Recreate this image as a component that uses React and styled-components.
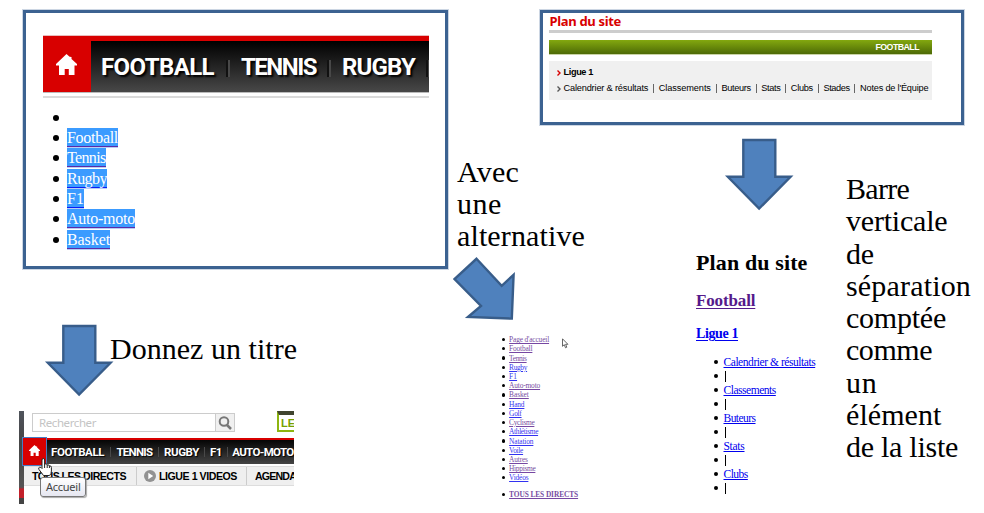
import React, { useLayoutEffect, useRef, useState } from "react";
import styled, { createGlobalStyle } from "styled-components";

const SERIF = '"Liberation Serif", serif';
const SANS = '"Liberation Sans", sans-serif';
const BLUE = "#0000ee";
const VISITED = "#551a8b";

const GlobalStyle = createGlobalStyle`
  * { box-sizing: border-box; }
  body { margin: 0; background: #fff; overflow: hidden; }
  svg { display: block; flex: none; }
  ul, h1, h2, h3, p { margin: 0; padding: 0; font-weight: inherit; font-size: inherit; }
`;

/* A run of text whose tracking is adjusted so that it fills a given width. */
const Run = styled.span`
  display: inline-block;
  flex: none;
  white-space: pre;
`;

function Fit({ width, children }) {
  const ref = useRef(null);
  const [spacing, setSpacing] = useState(0);
  useLayoutEffect(() => {
    const natural = ref.current.getBoundingClientRect().width;
    setSpacing((width - natural) / children.length);
  }, [width, children]);
  return (
    <Run ref={ref} style={{ letterSpacing: `${spacing}px` }}>
      {children}
    </Run>
  );
}

const Slide = styled.main`
  display: flex;
  width: 984px;
  height: 513px;
  overflow: hidden;
  background: #fff;
  color: #000;
`;
const LeftSide = styled.section`
  flex: none;
  width: 449px;
`;
const RightSide = styled.section`
  flex: none;
  width: 535px;
`;
const Columns = styled.div`
  display: flex;
`;
const Column = styled.div`
  flex: none;
  width: ${(p) => p.$width}px;
`;
const Frame = styled.div`
  width: ${(p) => p.$width}px;
  height: ${(p) => p.$height}px;
  margin: 10px 0 0 ${(p) => p.$left}px;
  border: 3px solid #3c6291;
  box-shadow: 0 0 0 1px #ccd6e3;
`;

const Caption = styled.p`
  margin: ${(p) => p.$margin};
  font: 30px/${(p) => p.$line || 32}px ${SERIF};
  display: flex;
  flex-direction: column;
  align-items: flex-start;
`;

const ArrowSvg = styled.svg`
  margin: ${(p) => p.$margin};
  fill: #4f81bd;
  stroke: #385d8a;
  stroke-width: 2.4;
`;

function DownArrow({ margin }) {
  return (
    <ArrowSvg $margin={margin} width="71" height="74" viewBox="0 0 71 74">
      <path d="M19.3 2H51.3V38.8H66.6L35.1 70.6L3.8 38.8H19.3Z" />
    </ArrowSvg>
  );
}

/* ---- Enlarged menu ---- */
const BigNav = styled.div`
  display: flex;
  width: 386px;
  height: 56px;
  margin: 23px 0 0 17px;
  background: #d80000;
  box-shadow: 0 -1px 0 #e9bcbc, 0 1px 0 #bbb;
`;
const BigHome = styled.div`
  flex: none;
  width: 48px;
  padding: 18px 0 0 13px;
`;
const BigBar = styled.div`
  display: flex;
  flex: 1;
  margin-top: 5px;
  padding: 8px 0 0 10px;
  background: linear-gradient(#000, #484848);
  color: #fff;
  font: 700 24px/36px Roboto, sans-serif;
  text-shadow: 2px 2px 2px #000;
  overflow: hidden;
`;
const BigSeparator = styled.i`
  flex: none;
  width: 4px;
  height: 17px;
  margin: 11px ${(p) => p.$after}px 0 ${(p) => p.$before}px;
  background: linear-gradient(90deg, #111 50%, #484848 50%);
`;
const GreyRule = styled.div`
  width: ${(p) => p.$width}px;
  height: ${(p) => p.$height}px;
  margin: ${(p) => p.$margin};
  background: ${(p) => p.$color};
`;

/* ---- Lists ---- */
const List = styled.ul`
  list-style: none;
  margin: ${(p) => p.$margin};
  font-family: ${SERIF};
  font-size: ${(p) => p.$size}px;
  line-height: ${(p) => p.$line}px;
`;
const Item = styled.li`
  display: flex;
  align-items: center;
  height: ${(p) => p.$height}px;
  margin-top: ${(p) => p.$before || 0}px;
  font-weight: ${(p) => (p.$bold ? 700 : 400)};
  &::before {
    content: "";
    flex: none;
    width: ${(p) => p.$dot}px;
    height: ${(p) => p.$dot}px;
    margin-right: ${(p) => p.$gap}px;
    border-radius: 50%;
    background: #000;
  }
`;
const TextLink = styled.a`
  display: inline-flex;
  color: ${(p) => (p.$visited ? VISITED : BLUE)};
  opacity: ${(p) => (p.$soft ? 0.8 : 1)};
  & > span {
    text-decoration: underline;
    text-decoration-thickness: 1px;
    text-underline-offset: ${(p) => p.$offset || 1}px;
  }
`;
const Selected = styled.a`
  display: inline-flex;
  height: 20px;
  background: #3b9bff;
  color: #fff;
  line-height: 20px;
  border-bottom: 1px solid #b9cdf5;
  box-shadow: inset 0 -1px 0 ${(p) => (p.$visited ? "#5a2ba8" : "#0a1ef5")};
`;

/* ---- Site map panel ---- */
const SiteTitle = styled.h1`
  margin: 0 0 0 6.5px;
  height: 17px;
  color: #d80000;
  font: 700 13px/16px "Noto Sans", sans-serif;
`;
const GreenBar = styled.div`
  display: flex;
  justify-content: flex-end;
  width: 383px;
  height: 14px;
  margin: 7px 0 0 6px;
  padding-right: 13px;
  background: linear-gradient(#83a80f, #4d6a06);
  box-shadow: 0 1px 0 #c9d3a5;
  color: #fff;
  font: 700 8.8px/14px ${SANS};
`;
const GreyPanel = styled.div`
  width: 383px;
  height: 39px;
  margin: 7px 0 0 6px;
  padding: 4px 0 0 8px;
  background: #f0f0f0;
  font: 9.2px/15.5px ${SANS};
`;
const PanelRow = styled.div`
  display: flex;
  align-items: center;
  height: 15.5px;
  font-weight: ${(p) => (p.$bold ? 700 : 400)};
`;
const Chevron = styled.svg`
  width: 4px;
  height: 6px;
  margin: 1px 2.5px 0 0;
  fill: none;
  stroke: ${(p) => p.$color};
  stroke-width: 1.4;
`;
const Pipe = styled.i`
  flex: none;
  width: 1px;
  height: 9px;
  margin: 0 4.7px 0 4.8px;
  background: #666;
`;

/* ---- Cropped page header ---- */
const Header = styled.div`
  position: relative;
  display: flex;
  width: 275px;
  height: 93px;
  margin: 13px 0 0 19px;
  overflow: hidden;
`;
const Edge = styled.div`
  flex: none;
  width: 5px;
  background: linear-gradient(#50545c, #454545 35%, #555 82%, #c2202a 84%, #c2202a 93%, #444 94%);
`;
const HeaderBody = styled.div`
  flex: none;
  width: 270px;
`;
const SearchLine = styled.div`
  display: flex;
  height: 27px;
`;
const SearchBox = styled.div`
  display: flex;
  flex: none;
  justify-content: space-between;
  width: 203px;
  height: 19px;
  margin: 2px 42px 0 8px;
  padding-left: 6px;
  border: 1px solid #ccc;
  color: #c4c4c4;
  font: 11.5px/18px "Noto Sans", sans-serif;
`;
const SearchButton = styled.div`
  width: 19px;
  padding: 2px;
  border-left: 1px solid #ccc;
  background: #f0f0f0;
`;
const Promo = styled.div`
  flex: none;
  width: 40px;
  height: 21px;
  border: 2px solid #8db510;
  border-top: 4px solid #40442f;
  color: #78a000;
  font: 700 11px/16px ${SANS};
  padding-left: 2px;
  white-space: nowrap;
`;
const SmallNav = styled.div`
  display: flex;
  align-items: center;
  height: 26px;
  border-top: 2px solid #d80000;
  background: linear-gradient(#050505, #444);
  color: #fff;
  font: 700 11.5px/24px Roboto, sans-serif;
  text-shadow: 1px 1px 1px #000;
`;
const SmallHome = styled.div`
  flex: none;
  width: 23px;
  height: 27px;
  margin: -1px 5px 0 -1px;
  padding: 7px 0 0 6px;
  background: #d80000;
  outline: 1px solid #477cc4;
`;
const SmallSeparator = styled.i`
  flex: none;
  width: 1px;
  height: 10px;
  margin: 0 ${(p) => p.$side}px;
  background: #494949;
`;
const SubNav = styled.div`
  display: flex;
  align-items: center;
  height: 20px;
  margin-top: 2px;
  padding-left: 8px;
  background: #efefef;
  border-top: 1px solid #ddd;
  border-bottom: 1px solid #ddd;
  font: 700 10.6px/18px ${SANS};
`;
const SubSeparator = styled.i`
  flex: none;
  width: 1px;
  height: 18px;
  margin: 0 ${(p) => p.$after}px 0 ${(p) => p.$before}px;
  background: #ccc;
`;
const PlayIcon = styled.svg`
  margin-right: 3px;
`;
const Tooltip = styled.div`
  position: absolute;
  left: 21px;
  top: 66px;
  width: 46px;
  height: 20px;
  padding-left: 5px;
  border: 1px solid #777;
  border-radius: 3px;
  background: linear-gradient(#fff, #e6e7f1);
  box-shadow: 1px 1px 1px #aaa;
  color: #444;
  font: 11px/17px "Noto Sans", sans-serif;
`;
const HandCursor = styled.svg`
  position: absolute;
  left: 18px;
  top: 46px;
`;

/* ---- Linear site map ---- */
const PlanTitle = styled.h1`
  margin-top: 38px;
  height: 26px;
  font: 700 22px/26px ${SERIF};
`;
const PlanHeading = styled.h2`
  margin-top: ${(p) => p.$top}px;
  height: 20px;
  font: 700 ${(p) => p.$size}px/20px ${SERIF};
`;
const TextBar = styled.i`
  width: 1px;
  height: 11px;
  margin-left: 1px;
  background: #000;
`;
const MiddleList = styled.div`
  display: flex;
  margin: 12px 0 0 53px;
`;

function House({ size }) {
  return (
    <svg width={size} height={size} viewBox="0 0 21 21" fill="#fff">
      <path d="M10.5 0L13.6 2.8L15.5 3V5L21 10V11.5H18.5V21H12.8V15H8.7V21H3V11.5H0V10Z" />
    </svg>
  );
}

const selectedLinks = [
  ["Football", 51, true],
  ["Tennis", 38.5, true],
  ["Rugby", 40, false],
  ["F1", 17.3, false],
  ["Auto-moto", 68, true],
  ["Basket", 43, true],
];
const leagueLinks = [
  ["Calendrier & résultats", 85.5],
  ["Classements", 53],
  ["Buteurs", 30.3],
  ["Stats", 19.8],
  ["Clubs", 22.9],
  ["Stades", 27],
  ["Notes de l'Équipe", 69],
];
const menuLinks = [
  ["Page d'accueil", 40, true],
  ["Football", 23.3, true],
  ["Tennis", 17.5, true],
  ["Rugby", 18, false],
  ["F1", 8, false],
  ["Auto-moto", 31, true],
  ["Basket", 19.7, true],
  ["Hand", 15.3, false],
  ["Golf", 12.5, false],
  ["Cyclisme", 25.3, true],
  ["Athlétisme", 29, false],
  ["Natation", 24.3, false],
  ["Voile", 14, false],
  ["Autres", 18.7, true],
  ["Hippisme", 26.3, true],
  ["Vidéos", 19.3, false],
];
const planLinks = [
  ["Calendrier & résultats", 91.7],
  ["Classements", 52.3],
  ["Buteurs", 32],
  ["Stats", 21],
  ["Clubs", 24.3],
];
const remark = [
  ["Barre", 63],
  ["verticale", 101.5],
  ["de", 28],
  ["séparation", 125],
  ["comptée", 100],
  ["comme", 86],
  ["un", 31.5],
  ["élément", 95.5],
  ["de la liste", 112],
];

export default function App() {
  return (
    <Slide>
      <GlobalStyle />
      <LeftSide>
        <Frame $width={425} $height={259} $left={23}>
          <BigNav>
            <BigHome>
              <House size={21} />
            </BigHome>
            <BigBar>
              <Fit width={113}>FOOTBALL</Fit>
              <BigSeparator $before={12} $after={11} />
              <Fit width={75}>TENNIS</Fit>
              <BigSeparator $before={11} $after={11} />
              <Fit width={73}>RUGBY</Fit>
              <BigSeparator $before={11} $after={0} />
            </BigBar>
          </BigNav>
          <GreyRule $width={386} $height={2} $margin="4px 0 0 17px" $color="#dadada" />
          <List $size={16} $line={20} $margin="9.5px 0 0 27px">
            <Item $height={20.35} $dot={6} $gap={8} />
            {selectedLinks.map(([label, width, visited]) => (
              <Item key={label} $height={20.35} $dot={6} $gap={8}>
                <Selected $visited={visited}>
                  <Fit width={width}>{label}</Fit>
                </Selected>
              </Item>
            ))}
          </List>
        </Frame>
        <Columns>
          <DownArrow margin="55px 0 0 44px" />
          <Caption $margin="64px 0 0 -5px">
            <Fit width={187}>Donnez un titre</Fit>
          </Caption>
        </Columns>
        <Header>
          <Edge />
          <HeaderBody>
            <SearchLine>
              <SearchBox>
                <Fit width={57}>Rechercher</Fit>
                <SearchButton>
                  <svg width="14" height="14" viewBox="0 0 14 14" fill="none" stroke="#777" strokeWidth="2">
                    <circle cx="6" cy="5.5" r="4.3" />
                    <path d="M9 9L13 13" strokeWidth="2.5" />
                  </svg>
                </SearchButton>
              </SearchBox>
              <Promo>LES</Promo>
            </SearchLine>
            <SmallNav>
              <SmallHome>
                <House size={11} />
              </SmallHome>
              <Fit width={53}>FOOTBALL</Fit>
              <SmallSeparator $side={5.7} />
              <Fit width={36}>TENNIS</Fit>
              <SmallSeparator $side={5.3} />
              <Fit width={35}>RUGBY</Fit>
              <SmallSeparator $side={5} />
              <Fit width={12}>F1</Fit>
              <SmallSeparator $side={4.6} />
              <Fit width={61.5}>AUTO-MOTO</Fit>
            </SmallNav>
            <SubNav>
              <Fit width={94}>TOUS LES DIRECTS</Fit>
              <SubSeparator $before={10} $after={7} />
              <PlayIcon width="12" height="12" viewBox="0 0 12 12">
                <circle cx="6" cy="6" r="6" fill="#929292" />
                <path d="M4.3 2.8L9.2 6L4.3 9.2Z" fill="#fff" />
              </PlayIcon>
              <Fit width={78}>LIGUE 1 VIDEOS</Fit>
              <SubSeparator $before={9} $after={8} />
              <Fit width={41}>AGENDA</Fit>
            </SubNav>
          </HeaderBody>
          <Tooltip>
            <Fit width={34.5}>Accueil</Fit>
          </Tooltip>
          <HandCursor width="16" height="20" viewBox="0 0 16 20" fill="#fff" stroke="#222" strokeWidth="1">
            <path d="M5 11V3Q5 1.5 6.3 1.5T7.6 3V7Q9.8 6 10.2 8Q12 7.2 12.4 9Q14.4 8.4 14.4 10.5V14Q14.4 17 12.5 18.5H6.5L2 12.5Q1 10.5 2.7 10.2Q4 10 5 11.5ZM7.6 7V11M10.2 8V11M12.4 9V11" />
          </HandCursor>
        </Header>
      </LeftSide>

      <RightSide>
        <Frame $width={424} $height={115} $left={91}>
          <SiteTitle>
            <Fit width={71.5}>Plan du site</Fit>
          </SiteTitle>
          <GreyRule $width={383} $height={3} $margin="0 0 0 6px" $color="#cdcdcd" />
          <GreenBar>
            <Fit width={43.5}>FOOTBALL</Fit>
          </GreenBar>
          <GreyPanel>
            <PanelRow $bold>
              <Chevron $color="#d80000" viewBox="0 0 4 6">
                <path d="M.5 .5L3 3L.5 5.5" />
              </Chevron>
              <Fit width={29.5}>Ligue 1</Fit>
            </PanelRow>
            <PanelRow>
              <Chevron $color="#555" viewBox="0 0 4 6">
                <path d="M.5 .5L3 3L.5 5.5" />
              </Chevron>
              {leagueLinks.map(([label, width], index) => (
                <React.Fragment key={label}>
                  {index > 0 && <Pipe />}
                  <Fit width={width - 0.8}>{label}</Fit>
                </React.Fragment>
              ))}
            </PanelRow>
          </GreyPanel>
        </Frame>

        <Columns>
          <Column $width={247}>
            <Caption $margin="31px 0 0 8px">
              <Fit width={62}>Avec</Fit>
              <Fit width={45}>une</Fit>
              <Fit width={128}>alternative</Fit>
            </Caption>
            <ArrowSvg $margin="4px 0 0 1px" width="67" height="67" viewBox="450 256 67 67">
              <path d="M476.5 258.8L501.7 285.8L513.6 274.8L511.8 318.6L468 317L481 306L454.5 279Z" />
            </ArrowSvg>
            <MiddleList>
              <List $size={7.4} $line={9} $margin="0">
                {menuLinks.map(([label, width, visited]) => (
                  <Item key={label} $height={9.22} $dot={3.2} $gap={3.9}>
                    <TextLink $visited={visited} $soft>
                      <Fit width={width}>{label}</Fit>
                    </TextLink>
                  </Item>
                ))}
                <Item $height={9.22} $before={7.4} $dot={3.2} $gap={3.9} $bold>
                  <TextLink $visited $soft>
                    <Fit width={69}>TOUS LES DIRECTS</Fit>
                  </TextLink>
                </Item>
              </List>
              <svg width="7" height="11" viewBox="0 0 7 11" fill="#fff" stroke="#555" strokeWidth=".9" transform="translate(-16 3)">
                <path d="M.5 .8V8.3L2.3 6.7L3.5 9.8L4.8 9.2L3.6 6.3H5.9Z" />
              </svg>
            </MiddleList>
          </Column>
          <Column $width={150}>
            <DownArrow margin="13px 0 0 28px" />
            <PlanTitle>
              <Fit width={111.5}>Plan du site</Fit>
            </PlanTitle>
            <PlanHeading $size={17} $top={15}>
              <TextLink $visited $offset={2}>
                <Fit width={59.3}>Football</Fit>
              </TextLink>
            </PlanHeading>
            <PlanHeading $size={14} $top={13}>
              <TextLink $offset={1.5}>
                <Fit width={42}>Ligue 1</Fit>
              </TextLink>
            </PlanHeading>
            <List $size={11.5} $line={14} $margin="11px 0 0 18px">
              {planLinks.map(([label, width]) => (
                <React.Fragment key={label}>
                  <Item $height={14} $dot={4} $gap={5.5}>
                    <TextLink>
                      <Fit width={width}>{label}</Fit>
                    </TextLink>
                  </Item>
                  <Item $height={14} $dot={4} $gap={5.5}>
                    <TextBar />
                  </Item>
                </React.Fragment>
              ))}
            </List>
          </Column>
          <Column $width={138}>
            <Caption $margin="48px 0 0 0" $line={32.25}>
              {remark.map(([line, width]) => (
                <Fit key={line} width={width}>{line}</Fit>
              ))}
            </Caption>
          </Column>
        </Columns>
      </RightSide>
    </Slide>
  );
}
